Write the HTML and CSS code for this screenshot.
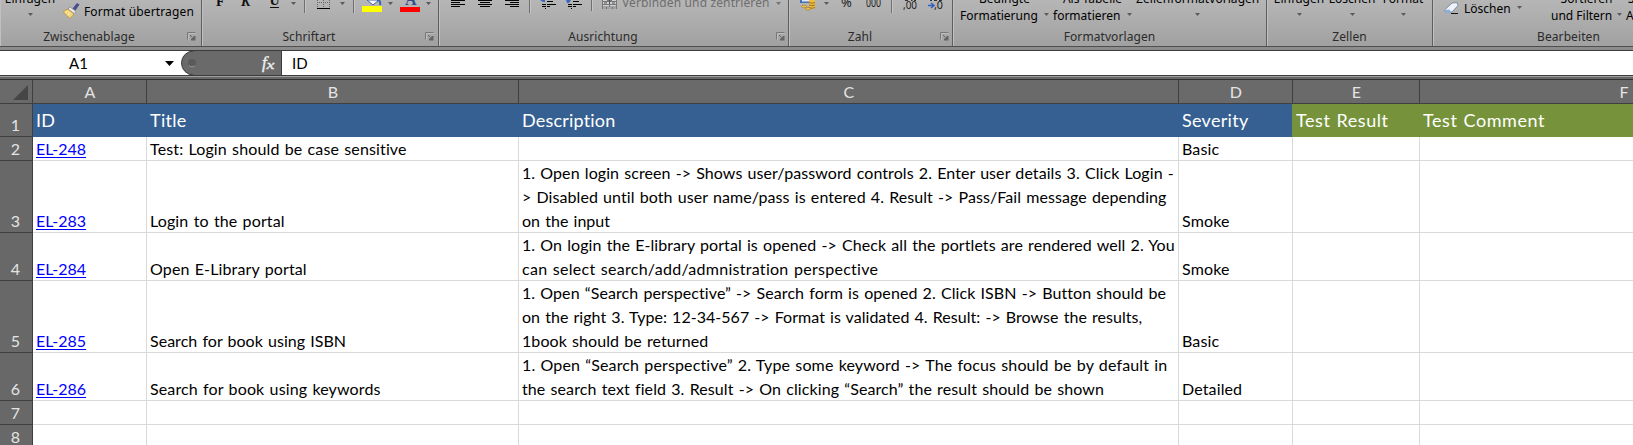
FILE: index.html
```html
<!DOCTYPE html>
<html lang="de">
<head>
<meta charset="utf-8">
<title>Tabelle</title>
<link rel="stylesheet" href="styles.css">
</head>
<body>
<svg class="defs" width="0" height="0">
  <defs>
    <symbol id="arrow" viewBox="0 0 5 3"><path d="M0 0h5L2.5 3z" fill="#5a5a5a"/></symbol>
    <symbol id="launcher" viewBox="0 0 9 9"><path d="M.5 7.500V.5H8.500" fill="none" stroke="#777"/><path d="M1.500 8V1.500H9" fill="none" stroke="#ccc" stroke-width=".6"/><path d="M3 3l2 2" stroke="#666"/><path d="M8.500 4v4.500H4V7l3-3z" fill="#666"/></symbol>
  </defs>
</svg>
<div class="app">
  <header class="ribbon">
    <section class="group g-clip">
      <div class="tools">
        <div class="big w60"><span>Einfügen</span><svg class="arrow"><use href="#arrow"/></svg></div>
        <svg class="brush" width="17" height="16" viewBox="0 0 17 16"><path d="M14 0l2.500 1.500-4 6-3-2z" fill="#4a4f8c"/><path d="M7 4l6 4.500-2 2L5 6z" fill="#e8e8ee" stroke="#777" stroke-width=".6"/><path d="M5 6l6 5-4 4.500L0 8.500z" fill="#f3d67a" stroke="#b98d2c" stroke-width=".7"/><path d="M4 8l-1 2.500M6.500 9.500L5 12.500" stroke="#fff3c0"/></svg>
        <span class="small fmt">Format übertragen</span>
      </div>
      <div class="caption"><span>Zwischenablage</span><svg class="launch"><use href="#launcher"/></svg></div>
    </section>
    <section class="group g-font">
      <svg class="tools" width="235" height="28" viewBox="203 0 235 28">
        <g font-family="Liberation Serif, serif" font-weight="bold" font-size="14" fill="#111"><text x="216" y="6">F</text><text x="241" y="6" font-style="italic">K</text><text x="269.500" y="5">U</text></g>
        <path d="M270 7.500h9" stroke="#111"/>
        <path d="M291 2h5l-2.500 3zM340 2h5l-2.500 3zM388 2h5l-2.500 3zM426 2h5l-2.500 3z" fill="#5a5a5a"/>
        <path d="M304.500 0v13M353.500 0v13" stroke="#6f6f6f"/><path d="M305.500 0v13M354.500 0v13" stroke="#c6c6c6"/>
        <path d="M317.500 0v7M323.500 0v7M329.500 0v7M317 2.500h13" stroke="#666" stroke-dasharray="1 1"/><path d="M317 8.500h13" stroke="#000"/>
        <path d="M367 0l6 5 6-5z" fill="#f4f7fc" stroke="#46639c"/><path d="M377 0q4 0 3 5" fill="none" stroke="#3565b5" stroke-width="2"/>
        <path d="M362 6h20v6h-20z" fill="#ff0"/>
        <text x="405" y="5" font-family="Liberation Serif, serif" font-weight="bold" font-size="16" fill="#2f4f8f">A</text>
        <path d="M400 7h20v5h-20z" fill="#f00"/>
      </svg>
      <div class="caption"><span>Schriftart</span><svg class="launch"><use href="#launcher"/></svg></div>
    </section>
    <section class="group g-align">
      <svg class="tools strip" width="182" height="28" viewBox="440 0 182 28">
        <path d="M451 .5h14M451 2.500h9M451 4.500h14M451 6.500h9M478 .5h14M480 2.500h10M478 4.500h14M480 6.500h10M505 .5h14M510 2.500h9M505 4.500h14M510 6.500h9" stroke="#000"/>
        <path d="M529.500 0v13M591.500 0v11" stroke="#6f6f6f"/><path d="M530.500 0v13M592.500 0v11" stroke="#c6c6c6"/>
        <path d="M540 0h5v2h-2zM566 0h5l-2 3h-2z" fill="#3a66c0"/>
        <path d="M547 1.500h6M542 4.500h4M547 4.500h9M542 6.500h4M547 6.500h3M545 8.500h1M573 1.500h6M568 4.500h4M573 4.500h9M568 6.500h4M573 6.500h3M571 8.500h1" stroke="#000"/>
        <path d="M602 0h15v9h-15z" fill="#777"/><path d="M603 0h4v1h-4zM612 0h4v1h-4zM603 5h6v1.500h-6zM610 5h6v1.500h-6zM603 7.500h3v1h-3zM607 7.500h5v1h-5zM613 7.500h3v1h-3zM603 2h13v2h-13z" fill="#d0d0d0"/><path d="M604 3h3M612 3h3M609.500 0v4" stroke="#555"/>
      </svg>
      <span class="merge">Verbinden und zentrieren</span>
      <svg class="arrow merge-arrow"><use href="#arrow"/></svg>
      <div class="caption"><span>Ausrichtung</span><svg class="launch"><use href="#launcher"/></svg></div>
    </section>
    <section class="group g-num">
      <svg class="tools" width="162" height="28" viewBox="790 0 162 28">
        <path d="M800 0h15v3h-15z" fill="#4570b8"/><path d="M802 0h7v1.500h-7z" fill="#dce7f8"/>
        <path d="M809 0h6v8q-3 2-6 0z" fill="#efbd3b"/><path d="M809 2.500q3 1.500 6 0M809 5q3 1.500 6 0M809 7.500q3 1.500 6 0" stroke="#8a5c10" fill="none" stroke-width=".8"/>
        <ellipse cx="804" cy="6.500" rx="2.500" ry="1.300" fill="#f2c544" stroke="#94661a" stroke-width=".5"/><ellipse cx="808" cy="8.800" rx="2.500" ry="1.300" fill="#f2c544" stroke="#94661a" stroke-width=".5"/>
        <path d="M824 2h5l-2.500 3z" fill="#5a5a5a"/>
        <g font-family="Noto Sans, sans-serif" fill="#222"><text x="841" y="7" font-size="13">%</text><text x="866" y="7" font-size="12" textLength="15" lengthAdjust="spacingAndGlyphs">000</text><text x="903" y="9" font-size="10" textLength="14" lengthAdjust="spacingAndGlyphs">,00</text><text x="934" y="9" font-size="10" textLength="9" lengthAdjust="spacingAndGlyphs">,0</text></g>
        <path d="M905 .5h3M911 .5h1.500M914 .5h2M930 .5h2M934 .5h3M939 .5h3" stroke="#333"/>
        <path d="M891.500 0v13" stroke="#6f6f6f"/><path d="M892.500 0v13" stroke="#c6c6c6"/>
        <path d="M928 5.500h5M931 3l3 2.500-3 2.500" fill="none" stroke="#2f62c0" stroke-width="1.500"/>
      </svg>
      <div class="caption"><span>Zahl</span><svg class="launch"><use href="#launcher"/></svg></div>
    </section>
    <section class="group g-style">
      <div class="tools">
        <div class="pair p-cond"><span>Bedingte</span><span class="line2">Formatierung<svg class="arrow"><use href="#arrow"/></svg></span></div>
        <div class="pair p-table"><span>Als Tabelle</span><span class="line2">formatieren<svg class="arrow"><use href="#arrow"/></svg></span></div>
        <div class="big p-cell"><span>Zellenformatvorlagen</span><svg class="arrow"><use href="#arrow"/></svg></div>
      </div>
      <div class="caption"><span>Formatvorlagen</span></div>
    </section>
    <section class="group g-cells">
      <div class="tools">
        <div class="big c-ins"><span>Einfügen</span><svg class="arrow"><use href="#arrow"/></svg></div>
        <div class="big c-del"><span>Löschen</span><svg class="arrow"><use href="#arrow"/></svg></div>
        <div class="big c-fmt"><span>Format</span><svg class="arrow"><use href="#arrow"/></svg></div>
      </div>
      <div class="caption"><span>Zellen</span></div>
    </section>
    <section class="group g-edit">
      <div class="tools">
        <svg class="eraser" width="15" height="13" viewBox="0 0 15 13"><path d="M8 1l5-.5 1 3-6 6.500-6 .5L.5 8z" fill="#eef3fb" stroke="#67778f" stroke-width=".8"/><path d="M.5 8l5-.5L7.500 10.500 2 11z" fill="#8fb0de"/><path d="M7 11.500h7" stroke="#111"/></svg>
        <span class="small del">Löschen</span><svg class="arrow del-arrow"><use href="#arrow"/></svg>
        <div class="pair p-sort"><span>Sortieren</span><span class="line2">und Filtern<svg class="arrow"><use href="#arrow"/></svg></span></div>
        <div class="pair p-find"><span>Suchen und</span><span class="line2">Auswählen</span></div>
      </div>
      <div class="caption"><span>Bearbeiten</span></div>
    </section>
  </header>

  <div class="formula">
    <div class="namebox"><span>A1</span></div>
    <svg class="fx" width="117" height="24" viewBox="165 0 117 24">
      <path d="M165 10h9l-4.500 5z" fill="#000"/>
      <path d="M281 0H193.500a12 12 0 0 0 0 24H281z" fill="#6a6a6a"/>
      <path d="M193.500 0a12 12 0 0 0 0 24" fill="none" stroke="#3c3c3c"/>
      <circle cx="192" cy="12" r="4" fill="#5a5a5a"/><path d="M189 14.500a4 4 0 0 0 6 0" stroke="#999" fill="none"/>
      <text x="262" y="16.500" font-family="Liberation Serif, serif" font-style="italic" font-size="17" fill="#eee" stroke="#eee" stroke-width=".4">f</text><text x="266.500" y="18" font-family="Liberation Serif, serif" font-style="italic" font-size="12" textLength="8" lengthAdjust="spacingAndGlyphs" fill="#eee" stroke="#eee" stroke-width=".3">x</text>
      <path d="M281.500 0v24" stroke="#3c3c3c"/>
    </svg>
    <div class="value">ID</div>
  </div>

  <main class="sheet">
    <div class="row heads">
      <div class="corner"><svg width="15" height="15"><path d="M15 0v15H0z" fill="#464646"/></svg></div>
      <div>A</div><div>B</div><div>C</div><div>D</div><div>E</div><div>F</div>
    </div>
    <div class="row titles">
      <div class="num">1</div><div>ID</div><div>Title</div><div class="t-desc">Description</div><div class="t-sev">Severity</div><div class="green">Test Result</div><div class="green last">Test Comment</div>
    </div>
    <div class="row r1">
      <div class="num">2</div><div><a>EL-248</a></div><div>Test: Login should be case sensitive</div><div></div><div>Basic</div><div></div><div></div>
    </div>
    <div class="row r3">
      <div class="num">3</div><div><a>EL-283</a></div><div>Login to the portal</div>
      <div><p class="s07">1. Open login screen -&gt; Shows user/password controls 2. Enter user details 3. Click Login -</p><p class="s07">&gt; Disabled until both user name/pass is entered 4. Result -&gt; Pass/Fail message depending</p><p class="s03">on the input</p></div>
      <div>Smoke</div><div></div><div></div>
    </div>
    <div class="row r2">
      <div class="num">4</div><div><a>EL-284</a></div><div>Open E-Library portal</div>
      <div><p class="s07">1. On login the E-library portal is opened -&gt; Check all the portlets are rendered well 2. You</p><p class="s28">can select search/add/admnistration perspective</p></div>
      <div>Smoke</div><div></div><div></div>
    </div>
    <div class="row r3">
      <div class="num">5</div><div><a>EL-285</a></div><div class="s03">Search for book using ISBN</div>
      <div><p class="s07">1. Open “Search perspective” -&gt; Search form is opened 2. Click ISBN -&gt; Button should be</p><p class="s03">on the right 3. Type: 12-34-567 -&gt; Format is validated 4. Result: -&gt; Browse the results,</p><p class="s07">1book should be returned</p></div>
      <div>Basic</div><div></div><div></div>
    </div>
    <div class="row r2">
      <div class="num">6</div><div><a>EL-286</a></div><div>Search for book using keywords</div>
      <div><p>1. Open “Search perspective” 2. Type some keyword -&gt; The focus should be by default in</p><p class="s09">the search text field 3. Result -&gt; On clicking “Search” the result should be shown</p></div>
      <div>Detailed</div><div></div><div></div>
    </div>
    <div class="row r1"><div class="num">7</div><div></div><div></div><div></div><div></div><div></div><div></div></div>
    <div class="row r1"><div class="num">8</div><div></div><div></div><div></div><div></div><div></div><div></div></div>
  </main>
</div>
</body>
</html>
```
FILE: styles.css
```css
* { box-sizing: border-box; }
body { margin: 0; background: #fff; color: #000; }
.defs { display: block; height: 0; }
.app { width: 1633px; height: 445px; overflow: hidden; }

/* Ribbon */
.ribbon {
  display: flex;
  width: 1633px;
  height: 47px;
  overflow: hidden;
  background: linear-gradient(#b6b6b6, #a1a1a1);
  border-bottom: 1px solid #505050;
  font: 12px/16px "Noto Sans", sans-serif;
}
.group {
  display: grid;
  grid-template-rows: 28px 18px;
  grid-template-columns: 100%;
  flex: none;
  border-right: 1px solid #5e5e5e;
  box-shadow: inset 1px 0 #c0c0c0;
  white-space: nowrap;
}
.g-clip { width: 202px; }
.g-font { width: 237px; }
.g-align { width: 350px; grid-template-columns: 183px 1fr 12px; }
.g-num { width: 164px; }
.g-style { width: 314px; }
.g-cells { width: 166px; }
.g-edit { width: 272px; }
.tools { display: flex; align-items: flex-start; }
svg.tools { display: block; margin-left: 1px; }
.caption {
  grid-column: 1 / -1;
  display: grid;
  grid-template-columns: 19px 1fr 19px;
  color: #2b2b2b;
}
.caption span { grid-column: 2; text-align: center; padding-top: 1px; letter-spacing: .08px; }
.g-clip .caption { grid-template-columns: 0 178px 1fr; }
.g-font .caption { grid-template-columns: 0 214px 1fr; }
.g-align .caption { grid-template-columns: 0 328px 1fr; }
.g-num .caption { grid-template-columns: 0 142px 1fr; }
.launch { width: 9px; height: 9px; margin: 4px 0 0 9px; }
.arrow { display: block; width: 5px; height: 3px; flex: none; }
.big { display: flex; flex-direction: column; align-items: center; margin-top: -9px; flex: none; }
.big .arrow { margin-top: 6px; }
.w60 { width: 60px; }
.brush { margin: 3px 0 0 3px; flex: none; }
.small { flex: none; }
.fmt { margin: 4px 0 0 4px; letter-spacing: .13px; }
.merge { margin-top: -5px; color: #6e6e6e; letter-spacing: .13px; }
.merge-arrow { margin: 2px 0 0; opacity: .7; }
.pair { display: flex; flex-direction: column; align-items: center; margin-top: -9px; flex: none; }
.pair .line2 { display: flex; margin-top: 1px; width: 100%; }
.pair .line2 .arrow { margin: 5px 0 0 auto; }
.p-cond { width: 89px; margin-left: 7px; }
.p-table { width: 79px; margin-left: 4px; }
.p-cell { margin-left: 4px; letter-spacing: .05px; }
.c-ins { margin-left: 5px; width: 54px; }
.c-del { margin-left: 1px; width: 50px; }
.c-fmt { margin-left: 2px; width: 48px; }
.eraser { margin: 2px 0 0 11px; flex: none; }
.del { margin: 1px 0 0 5px; width: 53px; }
.del-arrow { margin-top: 6px; }
.p-sort { width: 71px; margin-left: 29px; }
.p-find { width: 70px; margin-left: 4px; }

/* Formula bar */
.formula {
  display: flex;
  height: 33px;
  padding: 4px 0 5px;
  background: linear-gradient(#8c8c8c 0 3px, #3c3c3c 3px 4px, #fff 4px 28px, #3c3c3c 28px 29px, #a0a0a0 29px 30px, #686868 30px 32px, #303030 32px 33px);
  font: 15px/24px Lato, sans-serif;
}
.namebox { width: 165px; padding-right: 8px; text-align: center; line-height: 24px; }
.fx { display: block; flex: none; }
.value { padding-left: 10px; line-height: 24px; }

/* Sheet */
.sheet { width: 1828px; font: 16px/24px Lato, sans-serif; }
.row {
  display: grid;
  grid-template-columns: 33px 114px 372px 660px 114px 127px 408px;
}
.row > div {
  display: flex;
  flex-direction: column;
  justify-content: flex-end;
  padding-left: 3px;
  border-right: 1px solid #d9d9d9;
  border-bottom: 1px solid #d9d9d9;
  white-space: nowrap;
  letter-spacing: .13px;
  word-spacing: 1px;
}
.r1 > div { height: 24px; line-height: 23px; }
.r2 > div { height: 48px; }
.r3 > div { height: 72px; }
.r2 > div, .r3 > div { line-height: 23px; }
.row p { margin: 0; height: 24px; line-height: 24px; }
.row p:last-child { height: 23px; line-height: 23px; }
.row a { color: #00f; text-decoration: underline; text-underline-offset: 2px; letter-spacing: 0; }
.row > .num {
  align-items: center;
  padding: 0 1px 0 0;
  background: #686868;
  color: #e4e4e4;
  border-color: #3f3f3f;
}
.row > .s03, .row .s03 { letter-spacing: .03px; }
.row .s07 { letter-spacing: .07px; }
.row .s09 { letter-spacing: .09px; }
.row .s28 { letter-spacing: .28px; }

.heads > div {
  height: 24px;
  padding: 0 0 0 1px;
  align-items: center;
  line-height: 23px;
  background: #6a6a6a;
  color: #e4e4e4;
  border-color: #3f3f3f;
}
.heads > .corner { justify-content: flex-start; align-items: flex-end; padding: 5px 4px 0 0; }
.titles > div {
  height: 33px;
  padding-bottom: 4px;
  border: 0;
  background: #366092;
  color: #fff;
  font-size: 18px;
  line-height: 26px;
  letter-spacing: .3px;
}
.titles > .num { border: solid #3f3f3f; border-width: 0 1px 1px 0; font-size: 16px; line-height: 22px; padding-bottom: 0; }
.titles > .t-desc { letter-spacing: .2px; }
.titles > .green { background: #76933c; margin-left: -1px; padding-left: 4px; letter-spacing: .55px; }
```
